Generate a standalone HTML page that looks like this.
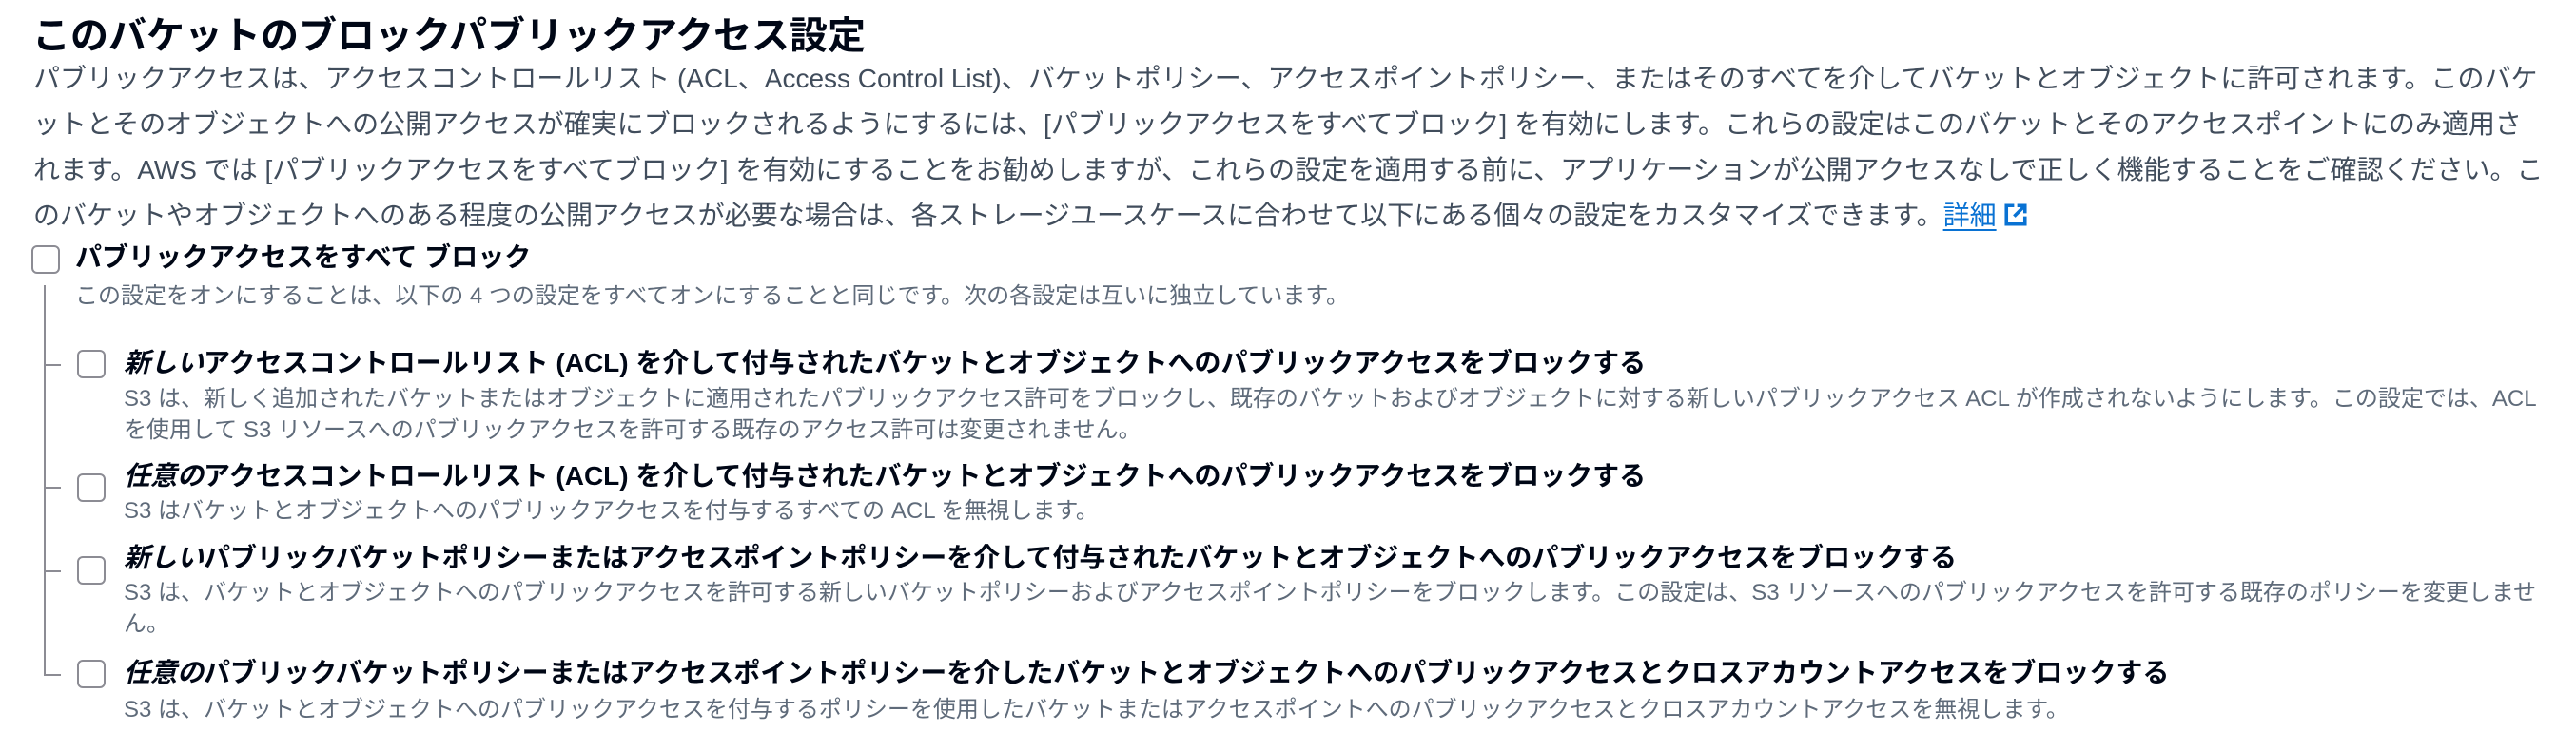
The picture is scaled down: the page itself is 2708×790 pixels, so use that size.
<!DOCTYPE html>
<html><head><meta charset="utf-8"><style>
body{margin:0;width:2708px;height:790px;background:#fff;font-family:"Liberation Sans","Noto Sans CJK JP",sans-serif;position:relative;overflow:hidden}
.a{position:absolute;white-space:nowrap}
h1{position:absolute;left:34px;top:12px;margin:0;font-size:40px;line-height:52px;font-weight:bold;color:#000716;white-space:nowrap}
.p{left:35px;font-size:28px;line-height:48px;color:#414d5c}
.lb{font-size:28px;line-height:36px;font-weight:bold;color:#000716}
.d{font-size:24px;line-height:33px;color:#5f6b7a}
.cb{position:absolute;width:26px;height:26px;border:2px solid #8c8c94;border-radius:6px;box-sizing:content-box}
.ln{position:absolute;background:#8c8c94}
a{color:#0972d3;text-decoration:underline;text-underline-offset:5px}
</style></head><body>
<h1>このバケットのブロックパブリックアクセス設定</h1>
<div class="a p" style="top:59px">パブリックアクセスは、アクセスコントロールリスト (ACL、Access Control List)、バケットポリシー、アクセスポイントポリシー、またはそのすべてを介してバケットとオブジェクトに許可されます。このバケ</div>
<div class="a p" style="top:107px">ットとそのオブジェクトへの公開アクセスが確実にブロックされるようにするには、[パブリックアクセスをすべてブロック] を有効にします。これらの設定はこのバケットとそのアクセスポイントにのみ適用さ</div>
<div class="a p" style="top:155px">れます。AWS では [パブリックアクセスをすべてブロック] を有効にすることをお勧めしますが、これらの設定を適用する前に、アプリケーションが公開アクセスなしで正しく機能することをご確認ください。こ</div>
<div class="a p" style="top:203px">のバケットやオブジェクトへのある程度の公開アクセスが必要な場合は、各ストレージユースケースに合わせて以下にある個々の設定をカスタマイズできます。<a>詳細</a> <svg width="26" height="26" viewBox="0 0 16 16" style="vertical-align:-3px"><path d="M7 2H2v12h12V9" fill="none" stroke="#0972d3" stroke-width="2.2"/><path d="M9 2h5v5M14 2L7 9" fill="none" stroke="#0972d3" stroke-width="2.2"/></svg></div>

<div class="cb" style="left:33px;top:258px"></div>
<div class="a lb" style="left:79px;top:253px">パブリックアクセスをすべて ブロック</div>
<div class="a d" style="left:79px;top:295px">この設定をオンにすることは、以下の 4 つの設定をすべてオンにすることと同じです。次の各設定は互いに独立しています。</div>

<div class="ln" style="left:46px;top:300px;width:2px;height:411px"></div>
<div class="ln" style="left:46px;top:383px;width:18px;height:2px"></div>
<div class="ln" style="left:46px;top:512px;width:18px;height:2px"></div>
<div class="ln" style="left:46px;top:600px;width:18px;height:2px"></div>
<div class="ln" style="left:46px;top:709px;width:18px;height:2px"></div>

<div class="cb" style="left:81px;top:368px"></div>
<div class="a lb" style="left:130px;top:364px"><i>新しい</i>アクセスコントロールリスト (ACL) を介して付与されたバケットとオブジェクトへのパブリックアクセスをブロックする</div>
<div class="a d" style="left:130px;top:403px">S3 は、新しく追加されたバケットまたはオブジェクトに適用されたパブリックアクセス許可をブロックし、既存のバケットおよびオブジェクトに対する新しいパブリックアクセス ACL が作成されないようにします。この設定では、ACL</div>
<div class="a d" style="left:130px;top:436px">を使用して S3 リソースへのパブリックアクセスを許可する既存のアクセス許可は変更されません。</div>

<div class="cb" style="left:81px;top:498px"></div>
<div class="a lb" style="left:130px;top:483px"><i>任意の</i>アクセスコントロールリスト (ACL) を介して付与されたバケットとオブジェクトへのパブリックアクセスをブロックする</div>
<div class="a d" style="left:130px;top:521px">S3 はバケットとオブジェクトへのパブリックアクセスを付与するすべての ACL を無視します。</div>

<div class="cb" style="left:81px;top:585px"></div>
<div class="a lb" style="left:130px;top:569px"><i>新しい</i>パブリックバケットポリシーまたはアクセスポイントポリシーを介して付与されたバケットとオブジェクトへのパブリックアクセスをブロックする</div>
<div class="a d" style="left:130px;top:607px">S3 は、バケットとオブジェクトへのパブリックアクセスを許可する新しいバケットポリシーおよびアクセスポイントポリシーをブロックします。この設定は、S3 リソースへのパブリックアクセスを許可する既存のポリシーを変更しませ</div>
<div class="a d" style="left:130px;top:640px">ん。</div>

<div class="cb" style="left:81px;top:694px"></div>
<div class="a lb" style="left:130px;top:690px"><i>任意の</i>パブリックバケットポリシーまたはアクセスポイントポリシーを介したバケットとオブジェクトへのパブリックアクセスとクロスアカウントアクセスをブロックする</div>
<div class="a d" style="left:130px;top:730px">S3 は、バケットとオブジェクトへのパブリックアクセスを付与するポリシーを使用したバケットまたはアクセスポイントへのパブリックアクセスとクロスアカウントアクセスを無視します。</div>
</body></html>
